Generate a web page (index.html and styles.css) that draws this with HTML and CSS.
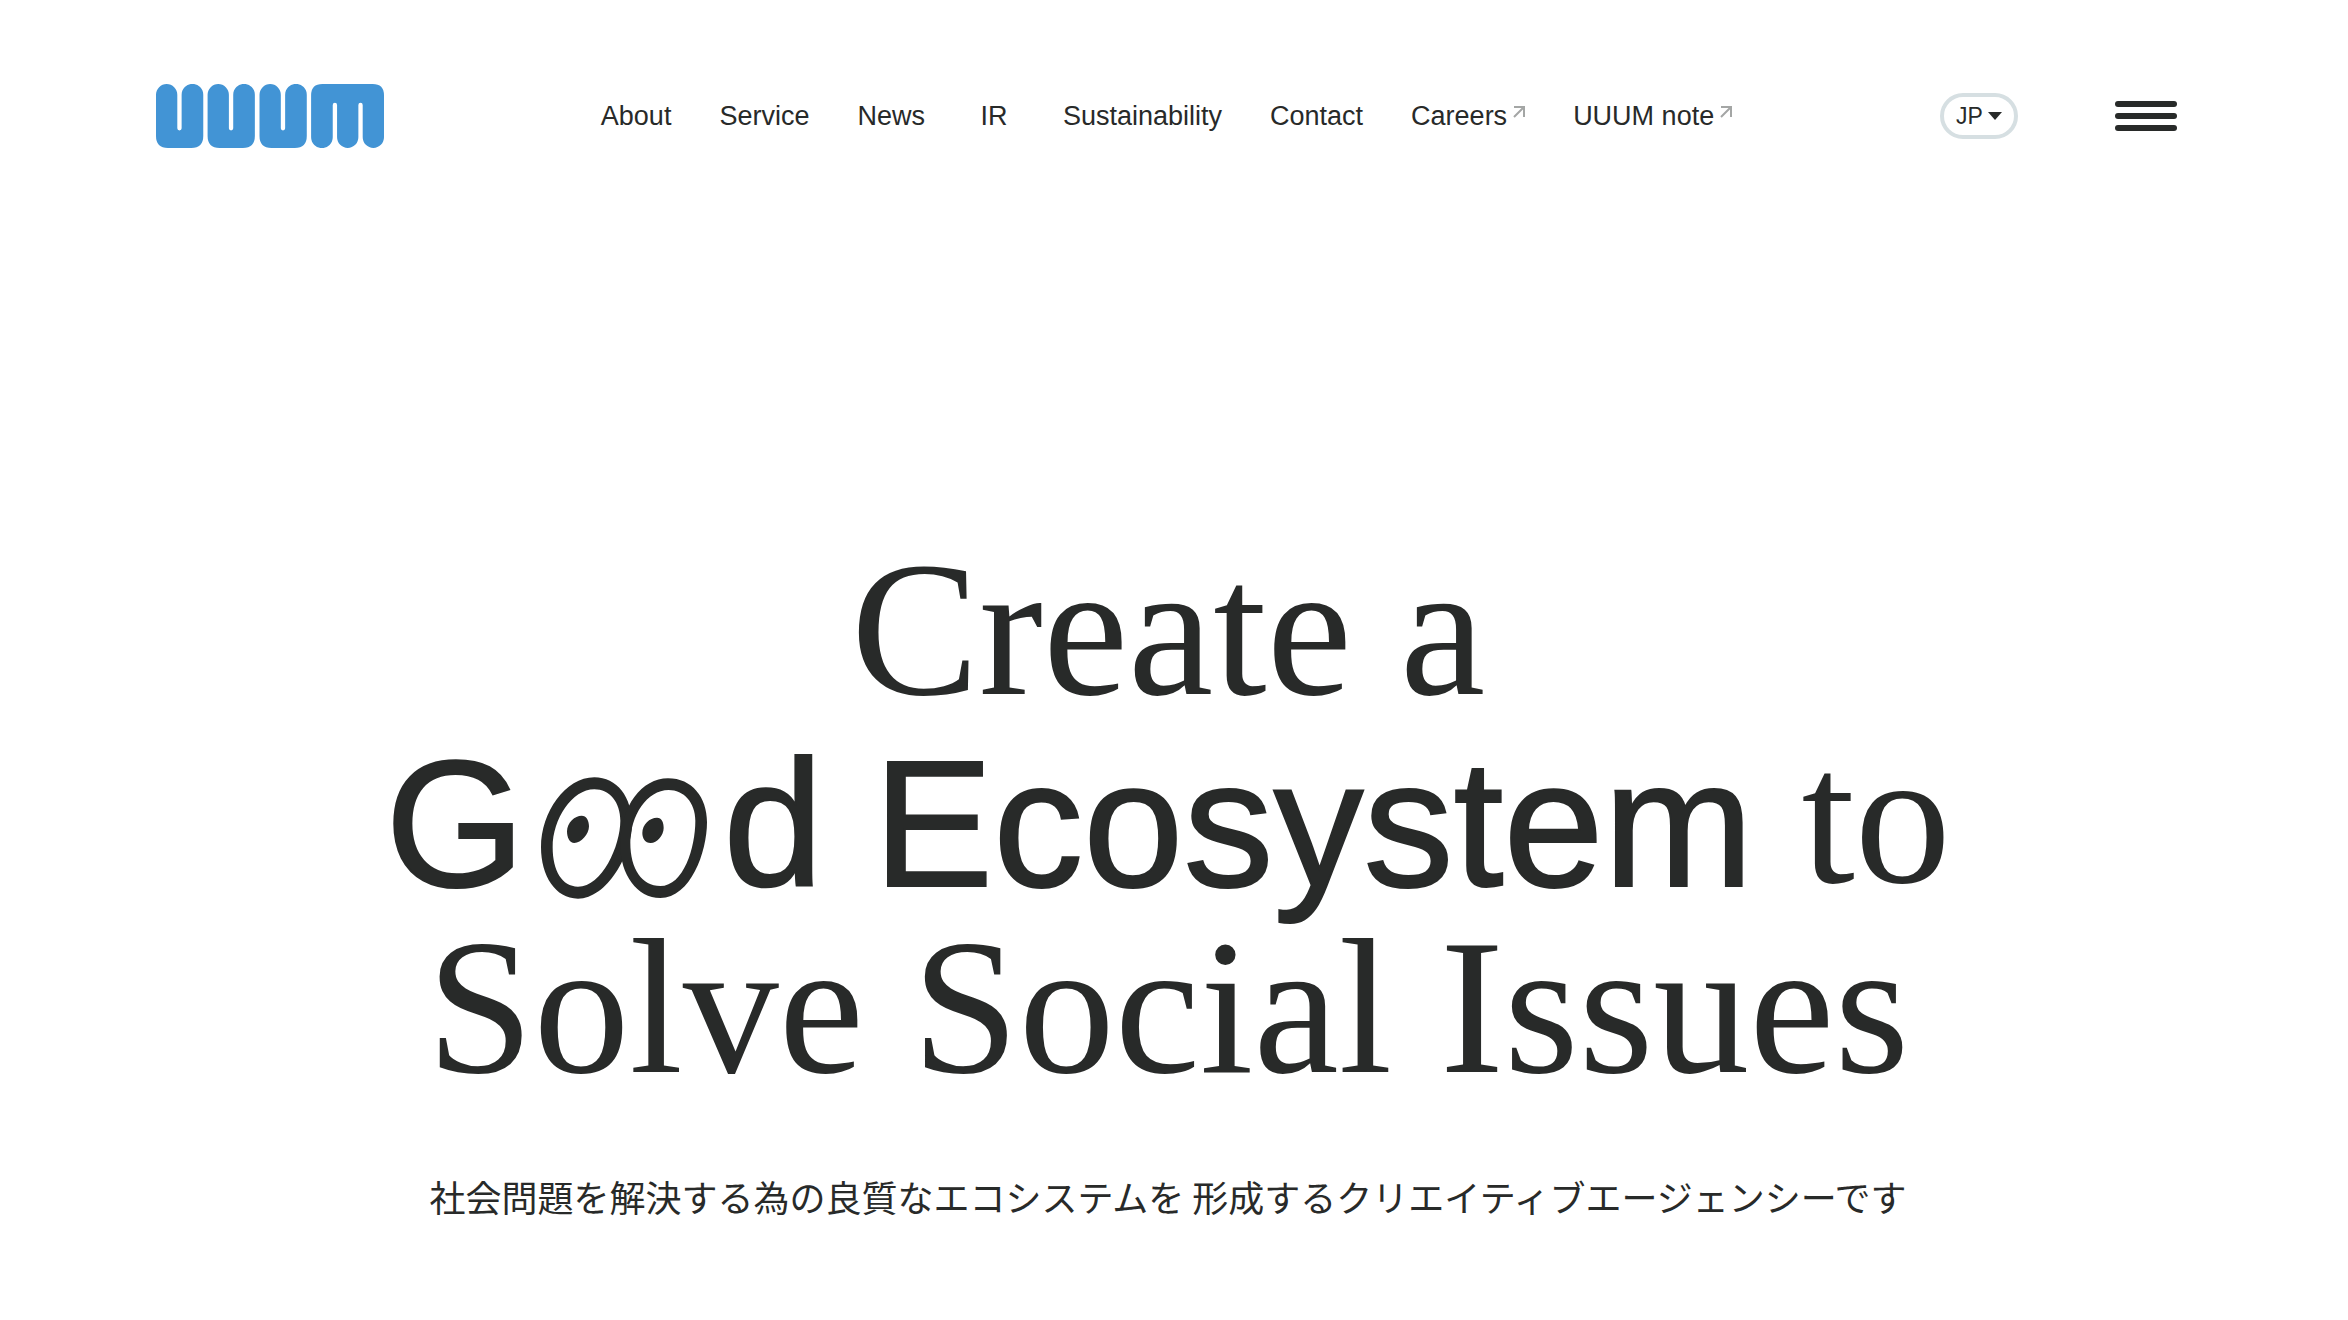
FILE: index.html
```html
<!DOCTYPE html>
<html lang="ja">
<head>
<meta charset="utf-8">
<meta name="viewport" content="width=device-width, initial-scale=1">
<title>UUUM</title>
<link rel="stylesheet" href="styles.css">
</head>
<body>
<header class="header">
  <a class="logo" href="#" aria-label="UUUM">
    <svg class="logo-mark" viewBox="0 0 685 192" aria-hidden="true">
      <defs>
        <path id="logo-u" d="M0 32a32 32 0 0 1 64 0V133a6.500 6.500 0 0 0 13 0V32a32.500 32.500 0 0 1 65 0V156q0 36-36 36H36q-36 0-36-36z"/>
      </defs>
      <use href="#logo-u"/>
      <use href="#logo-u" x="155"/>
      <use href="#logo-u" x="311"/>
      <path d="M466 34q0-34 34-34H651q34 0 34 34V160a32 32 0 0 1-64 0V63a6.500 6.500 0 0 0-13 0V160a32 32 0 0 1-64 0V63a6.500 6.500 0 0 0-13 0V160a32.500 32.500 0 0 1-65 0z"/>
    </svg>
  </a>
  <nav class="nav">
    <a class="nav-link" href="#">About</a>
    <a class="nav-link" href="#">Service</a>
    <a class="nav-link" href="#">News</a>
    <a class="nav-link" href="#">IR</a>
    <a class="nav-link" href="#">Sustainability</a>
    <a class="nav-link" href="#">Contact</a>
    <a class="nav-link" href="#">Careers<svg class="external" viewBox="0 0 12 12" aria-hidden="true"><path d="M1 1h10v10M11 1 1 11"/></svg></a>
    <a class="nav-link" href="#">UUUM note<svg class="external" viewBox="0 0 12 12" aria-hidden="true"><path d="M1 1h10v10M11 1 1 11"/></svg></a>
  </nav>
  <div class="tools">
    <div class="language">
      <select class="language-select" aria-label="Language">
        <option>JP</option>
        <option>EN</option>
      </select>
      <svg class="language-arrow" viewBox="0 0 14 8" aria-hidden="true"><path d="M0 0h14L7 8z"/></svg>
    </div>
    <button class="menu" type="button" aria-label="Menu">
      <span class="menu-bar"></span>
      <span class="menu-bar"></span>
      <span class="menu-bar"></span>
    </button>
  </div>
</header>
<main class="hero">
  <h1 class="title">
    <span class="title-line">Create a</span>
    <span class="title-line"><span class="title-sans">G<svg class="eyes" viewBox="0 0 498 364" role="img" aria-label="oo"><g transform="translate(-62 -115)" fill-rule="evenodd"><path d="M222 115C290 115 335 175 335 255C335 345 260 479 173 479C105 479 62 410 62 325C62 220 135 115 222 115zM222 151C155 151 97 240 97 325C97 395 125 443 173 443C245 443 300 320 300 245C300 190 268 151 222 151z"/><path d="M443 118C515 118 560 175 560 250C560 340 510 477 420 477C350 477 300 405 300 320C300 200 365 118 443 118zM445 153C380 153 330 230 330 312C330 390 365 441 420 441C490 441 525 325 525 245C525 190 490 153 445 153z"/><path d="M184 230C198 230 206 244 206 262C206 286 182 312 162 312C148 312 140 296 140 277C140 250 164 230 184 230zM410 236C424 236 430 250 430 267C430 290 410 312 391 312C374 312 366 298 366 282C366 256 388 236 410 236z"/></g></svg>d Ecosystem</span> to</span>
    <span class="title-line">Solve Social Issues</span>
  </h1>
  <p class="lead">社会問題を解決する為の良質なエコシステムを 形成するクリエイティブエージェンシーです</p>
</main>
</body>
</html>
```
FILE: styles.css
```css
* {
  box-sizing: border-box;
}

body {
  margin: 0;
  padding-right: 12px;
  background: #fff;
  color: #282a29;
  font-family: "Liberation Sans", Arial, "Noto Sans CJK JP", sans-serif;
}

.header {
  display: grid;
  grid-template-columns: 1fr auto 1fr;
  align-items: center;
  padding: 84px 159px 0 156px;
}

.logo {
  justify-self: start;
}

.logo-mark {
  display: block;
  width: 228px;
  height: 64px;
  fill: #4294d5;
}

.nav {
  display: flex;
  align-items: center;
  gap: 48px;
}

.nav-link {
  display: flex;
  justify-content: center;
  min-width: 42px;
  color: inherit;
  font-size: 27px;
  line-height: 32px;
  text-decoration: none;
  white-space: nowrap;
}

.external {
  width: 12px;
  height: 12px;
  margin: 6px 0 0 6px;
  fill: none;
  stroke: #a4a6a5;
  stroke-width: 2;
}

.tools {
  display: flex;
  align-items: center;
  justify-content: flex-end;
  gap: 97px;
}

.language {
  position: relative;
}

.language-select {
  display: block;
  width: 78px;
  height: 46px;
  padding: 0 0 0 12px;
  appearance: none;
  background: none;
  border: 4px solid #d6dfe2;
  border-radius: 23px;
  color: inherit;
  font-family: inherit;
  font-size: 23px;
}

.language-arrow {
  position: absolute;
  top: 19px;
  right: 16px;
  width: 14px;
  height: 8px;
  fill: currentColor;
  pointer-events: none;
}

.menu {
  display: flex;
  flex-direction: column;
  gap: 6px;
  width: 62px;
  padding: 0;
  background: none;
  border: 0;
}

.menu-bar {
  height: 6px;
  border-radius: 3px;
  background: #282a29;
}

.hero {
  padding-top: 388px;
  text-align: center;
}

.title {
  margin: 0;
  font-family: "Liberation Serif", "Times New Roman", serif;
  font-size: 192px;
  font-weight: 400;
  line-height: 188px;
}

.title-line {
  display: block;
  white-space: nowrap;
}

.title-sans {
  font-family: "Liberation Sans", Arial, sans-serif;
  font-size: 180px;
  line-height: 1;
  vertical-align: -4px;
  -webkit-text-stroke: 2px currentColor;
}

.eyes {
  width: 166px;
  height: 122px;
  margin: 0 16px;
  fill: currentColor;
  vertical-align: -13px;
}

.lead {
  margin: 67px 0 0;
  font-family: "Noto Sans CJK JP", sans-serif;
  font-size: 36px;
  line-height: 54px;
}
```
